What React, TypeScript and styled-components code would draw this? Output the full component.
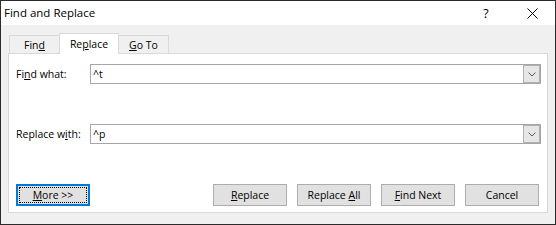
import React from "react";
import styled, { createGlobalStyle } from "styled-components";

const GlobalStyle = createGlobalStyle`
  html, body { margin: 0; padding: 0; background: #ffffff; }
  body { font-family: "Segoe UI", "Open Sans", "Noto Sans", sans-serif; color: #000; }
  * { box-sizing: border-box; }
`;

const Window = styled.div`
  width: 556px;
  height: 225px;
  border: 1px solid #2b2b2b;
  background: #f0f0f0;
  display: flex;
  flex-direction: column;
`;

const TitleBar = styled.div`
  height: 24px;
  background: #ffffff;
  display: flex;
  align-items: center;
  padding-left: 3px;
`;

const Title = styled.div`
  flex: 1;
  font-size: 11.5px;
  line-height: 24px;
`;

const CaptionButton = styled.div`
  width: 46px;
  height: 24px;
  display: flex;
  align-items: center;
  justify-content: center;
  font-size: 12.5px;
  color: #000;
`;

const Body = styled.div`
  flex: 1;
  display: flex;
  flex-direction: column;
  padding: 8px 7px 11px 7px;
`;

const TabList = styled.div`
  height: 20px;
  display: flex;
  align-items: flex-end;
  padding-left: 1px;
  position: relative;
  z-index: 1;
`;

const Tab = styled.div<{ $active?: boolean; $w: number }>`
  width: ${(p) => p.$w}px;
  height: ${(p) => (p.$active ? 21 : 18)}px;
  margin-bottom: ${(p) => (p.$active ? -1 : 0)}px;
  margin-left: -1px;
  &:first-child { margin-left: 0; }
  background: ${(p) => (p.$active ? "#ffffff" : "#f0f0f0")};
  border: 1px solid #d9d9d9;
  border-bottom: none;
  display: flex;
  align-items: center;
  justify-content: center;
  font-size: 10.5px;
  padding-top: ${(p) => (p.$active ? 0 : 1)}px;
`;

const Panel = styled.div`
  flex: 1;
  background: #ffffff;
  border: 1px solid #d9d9d9;
  padding: 10px 6px 6px 7px;
  display: flex;
  flex-direction: column;
`;

const FieldRow = styled.div<{ $gap?: number }>`
  display: flex;
  align-items: center;
  height: 20px;
  margin-bottom: ${(p) => p.$gap ?? 0}px;
`;

const Label = styled.div`
  width: 74px;
  font-size: 10.5px;
`;

const Combo = styled.div`
  flex: 1;
  height: 20px;
  border: 1px solid #a6a6a6;
  background: #ffffff;
  display: flex;
  align-items: stretch;
`;

const ComboValue = styled.div`
  flex: 1;
  font-size: 10.5px;
  padding-left: 2px;
  display: flex;
  align-items: center;
`;

const DropButton = styled.div`
  width: 17px;
  background: #e6e6e6;
  border: 1px solid #b0b0b0;
  display: flex;
  align-items: center;
  justify-content: center;
`;

const ButtonRow = styled.div`
  display: flex;
  gap: 10px;
  height: 22px;
  padding-right: 2px;
`;

const Button = styled.div<{ $focused?: boolean; $push?: boolean }>`
  width: 74px;
  height: 22px;
  background: #e1e1e1;
  border: ${(p) => (p.$focused ? "2px solid #0078d7" : "1px solid #adadad")};
  outline: ${(p) => (p.$focused ? "1px dotted #000" : "none")};
  outline-offset: -4px;
  margin-left: ${(p) => (p.$push ? "auto" : "0")};
  display: flex;
  align-items: center;
  justify-content: center;
  font-size: 10.5px;
`;

const Caption = styled.span`
  white-space: pre;
`;

const Key = styled.span`
  text-decoration: underline;
  text-underline-offset: 1px;
`;

const Chevron = () => (
  <svg width="8" height="5" viewBox="0 0 8 5">
    <path d="M0.5 0.5 L4 4 L7.5 0.5" fill="none" stroke="#5a5a5a" strokeWidth="1" />
  </svg>
);

const CloseIcon = () => (
  <svg width="11" height="11" viewBox="0 0 11 11">
    <path d="M0.5 0.5 L10.5 10.5 M10.5 0.5 L0.5 10.5" fill="none" stroke="#000" strokeWidth="1" />
  </svg>
);

export default function App() {
  return (
    <>
      <GlobalStyle />
      <Window>
        <TitleBar>
          <Title>Find and Replace</Title>
          <CaptionButton>?</CaptionButton>
          <CaptionButton>
            <CloseIcon />
          </CaptionButton>
        </TitleBar>
        <Body>
          <TabList>
            <Tab $w={51}>
              <Caption>
                Fin<Key>d</Key>
              </Caption>
            </Tab>
            <Tab $w={60} $active>
              <Caption>
                Re<Key>p</Key>lace
              </Caption>
            </Tab>
            <Tab $w={51}>
              <Caption>
                <Key>G</Key>o To
              </Caption>
            </Tab>
          </TabList>
          <Panel>
            <FieldRow $gap={40}>
              <Label>
                Fi<Key>n</Key>d what:
              </Label>
              <Combo>
                <ComboValue>^t</ComboValue>
                <DropButton>
                  <Chevron />
                </DropButton>
              </Combo>
            </FieldRow>
            <FieldRow $gap={40}>
              <Label>
                Replace w<Key>i</Key>th:
              </Label>
              <Combo>
                <ComboValue>^p</ComboValue>
                <DropButton>
                  <Chevron />
                </DropButton>
              </Combo>
            </FieldRow>
            <ButtonRow>
              <Button $focused>
                <Caption>
                  <Key>M</Key>ore &gt;&gt;
                </Caption>
              </Button>
              <Button $push>
                <Caption>
                  <Key>R</Key>eplace
                </Caption>
              </Button>
              <Button>
                <Caption>
                  Replace <Key>A</Key>ll
                </Caption>
              </Button>
              <Button>
                <Caption>
                  <Key>F</Key>ind Next
                </Caption>
              </Button>
              <Button>
                <Caption>Cancel</Caption>
              </Button>
            </ButtonRow>
          </Panel>
        </Body>
      </Window>
    </>
  );
}
